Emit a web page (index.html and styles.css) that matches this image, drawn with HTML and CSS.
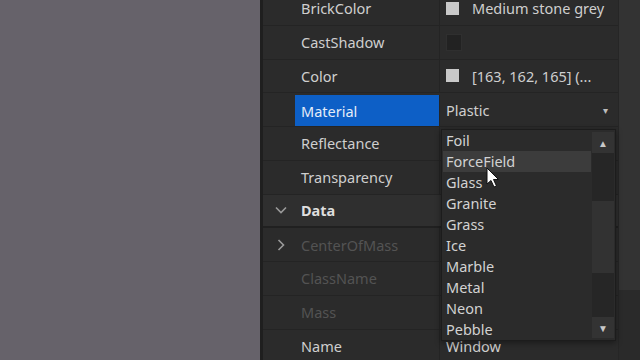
FILE: index.html
```html
<!DOCTYPE html>
<html lang="en">
<head>
  <meta charset="UTF-8">
  <title>Properties</title>
  <link rel="stylesheet" href="styles.css">
</head>
<body>

<div class="viewport"></div>

<div class="panel">
  <div class="props">
    <div class="row">
      <div class="expander"></div>
      <div class="name">BrickColor</div>
      <div class="value"><span class="swatch"></span>Medium stone grey</div>
    </div>
    <div class="row">
      <div class="expander"></div>
      <div class="name">CastShadow</div>
      <div class="value"><span class="checkbox"></span></div>
    </div>
    <div class="row">
      <div class="expander"></div>
      <div class="name">Color</div>
      <div class="value"><span class="swatch"></span>[163, 162, 165] (...</div>
    </div>
    <div class="row">
      <div class="expander"></div>
      <div class="name selected">Material</div>
      <div class="value select">Plastic <span class="caret">&#9662;</span></div>
    </div>
    <div class="row">
      <div class="expander"></div>
      <div class="name">Reflectance</div>
      <div class="value"></div>
    </div>
    <div class="row">
      <div class="expander"></div>
      <div class="name">Transparency</div>
      <div class="value"></div>
    </div>
    <div class="row category">
      <div class="expander">
        <svg width="12" height="8" viewBox="0 0 12 8"><path d="M1 1.5 L6 6.5 L11 1.5" fill="none" stroke="#9a9a9a" stroke-width="1.6"/></svg>
      </div>
      <div class="name">Data</div>
    </div>
    <div class="row">
      <div class="expander">
        <svg width="8" height="12" viewBox="0 0 8 12"><path d="M1.5 1 L6.5 6 L1.5 11" fill="none" stroke="#9a9a9a" stroke-width="1.6"/></svg>
      </div>
      <div class="name muted">CenterOfMass</div>
      <div class="value"></div>
    </div>
    <div class="row">
      <div class="expander"></div>
      <div class="name muted">ClassName</div>
      <div class="value"></div>
    </div>
    <div class="row">
      <div class="expander"></div>
      <div class="name muted">Mass</div>
      <div class="value"></div>
    </div>
    <div class="row">
      <div class="expander"></div>
      <div class="name">Name</div>
      <div class="value">Window</div>
    </div>
  </div>
  <div class="scrollbar">
    <div class="scroll-thumb"></div>
  </div>
</div>

<div class="dropdown">
  <ul class="options">
    <li>Foil</li>
    <li class="hover">ForceField</li>
    <li>Glass</li>
    <li>Granite</li>
    <li>Grass</li>
    <li>Ice</li>
    <li>Marble</li>
    <li>Metal</li>
    <li>Neon</li>
    <li>Pebble</li>
  </ul>
  <div class="list-scroll">
    <div class="arrow">&#9650;</div>
    <div class="list-track"><div class="list-thumb"></div></div>
    <div class="arrow">&#9660;</div>
  </div>
</div>

<svg class="cursor" width="14" height="22" viewBox="0 0 14 22">
  <path d="M1 1 L1 17 L5 13.5 L8 20 L10.5 19 L7.5 12.5 L12.5 12.5 Z" fill="#ffffff" stroke="#111" stroke-width="1"/>
</svg>

</body>
</html>
```

FILE: styles.css
```css
* {
  box-sizing: border-box;
}

body {
  margin: 0;
  height: 360px;
  overflow: hidden;
  display: flex;
  background: #67636a;
  font-family: "Noto Sans", Arial, sans-serif;
  font-size: 14.5px;
  color: #cfcfcf;
}

.viewport {
  width: 260px;
  flex: none;
  background: #66626a;
}

.panel {
  flex: 1;
  display: flex;
  background: #2b2b2b;
  border-left: 3px solid #1f1f1f;
  overflow: hidden;
}

.props {
  flex: 1;
  margin-top: -8px;
}

.row {
  display: grid;
  grid-template-columns: 32px 145px 1fr;
  height: 33.76px;
  border-bottom: 1px solid #242424;
}

.expander {
  display: flex;
  align-items: center;
  justify-content: center;
  padding-left: 4px;
}

.name {
  display: flex;
  align-items: center;
  padding-left: 6px;
  border-right: 1px solid #242424;
  white-space: nowrap;
}

.name.selected {
  background: #0d5fc6;
  color: #e4ecf8;
  margin-top: 2px;
}

.value {
  display: flex;
  align-items: center;
  padding-left: 6px;
  white-space: nowrap;
}

.muted {
  color: #535353;
}

.swatch {
  width: 13px;
  height: 13px;
  background: #c9c9c9;
  margin-right: 13px;
}

.checkbox {
  width: 16px;
  height: 17px;
  background: #222;
  border: 1px solid #2f2f2f;
}

.select {
  justify-content: space-between;
  padding-right: 10px;
}

.caret {
  font-size: 10px;
  color: #bdbdbd;
}

.category {
  background: #2f2f2f;
  border-bottom: 2px solid #202020;
}

.category .name {
  font-weight: bold;
  color: #dedede;
  border-right: none;
}

.scrollbar {
  width: 22px;
  flex: none;
  background: #2a2a2a;
  border-left: 1px solid #262626;
}

.scroll-thumb {
  height: 290px;
  background: #333;
}

.dropdown {
  position: absolute;
  left: 441px;
  top: 129px;
  width: 175px;
  height: 212px;
  display: flex;
  background: #2b2b2b;
  border: 1px solid #1c1c1c;
  box-shadow: 0 2px 6px rgba(0, 0, 0, 0.4);
}

.options {
  flex: 1;
  list-style: none;
  margin: 0;
  padding: 0 1px;
}

.options li {
  height: 21px;
  line-height: 20px;
  padding-left: 3px;
  color: #d2d2d2;
}

.options li.hover {
  background: #3c3c3c;
}

.list-scroll {
  width: 22px;
  display: flex;
  flex-direction: column;
  background: #262626;
  margin: 2px 1px 2px 0;
}

.arrow {
  height: 21px;
  background: #333;
  color: #c8c8c8;
  font-size: 10px;
  display: flex;
  align-items: center;
  justify-content: center;
}

.list-track {
  flex: 1;
  padding-top: 48px;
}

.list-thumb {
  height: 72px;
  background: #323232;
}

.cursor {
  position: absolute;
  left: 486px;
  top: 167px;
}
```
